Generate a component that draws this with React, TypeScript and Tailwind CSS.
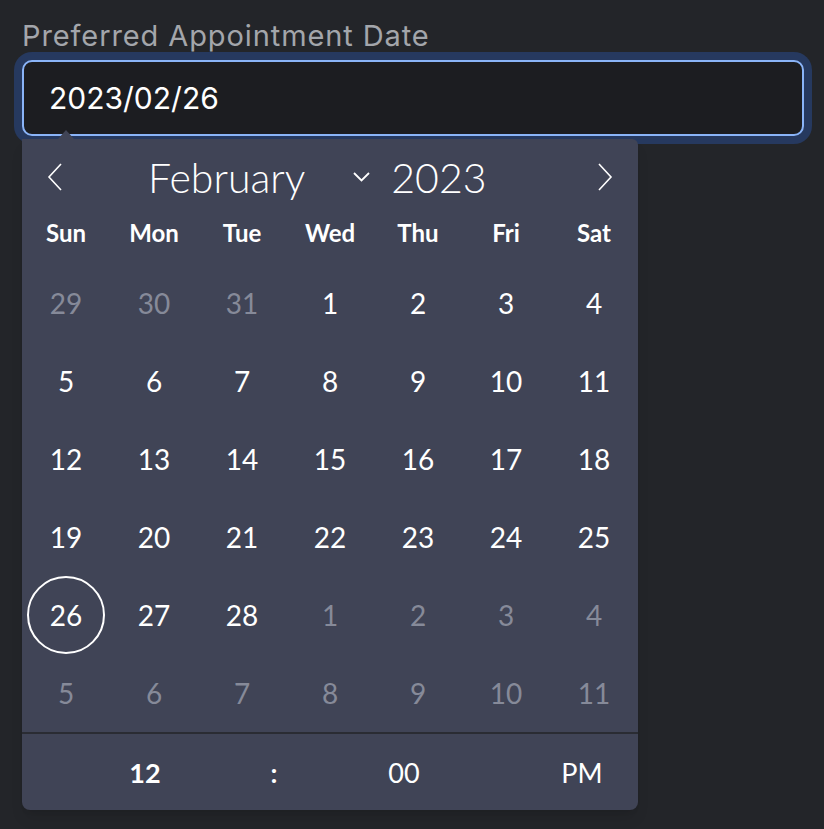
import React from "react";

const weekdays = ["Sun", "Mon", "Tue", "Wed", "Thu", "Fri", "Sat"];

type Day = { n: number; muted?: boolean; selected?: boolean };

const weeks: Day[][] = [
  [{ n: 29, muted: true }, { n: 30, muted: true }, { n: 31, muted: true }, { n: 1 }, { n: 2 }, { n: 3 }, { n: 4 }],
  [{ n: 5 }, { n: 6 }, { n: 7 }, { n: 8 }, { n: 9 }, { n: 10 }, { n: 11 }],
  [{ n: 12 }, { n: 13 }, { n: 14 }, { n: 15 }, { n: 16 }, { n: 17 }, { n: 18 }],
  [{ n: 19 }, { n: 20 }, { n: 21 }, { n: 22 }, { n: 23 }, { n: 24 }, { n: 25 }],
  [{ n: 26, selected: true }, { n: 27 }, { n: 28 }, { n: 1, muted: true }, { n: 2, muted: true }, { n: 3, muted: true }, { n: 4, muted: true }],
  [{ n: 5, muted: true }, { n: 6, muted: true }, { n: 7, muted: true }, { n: 8, muted: true }, { n: 9, muted: true }, { n: 10, muted: true }, { n: 11, muted: true }],
];

export default function App() {
  return (
    <div className="min-h-screen bg-[#232529] px-[22px] pt-[18px] font-['Inter',sans-serif]">
      {/* Label */}
      <label className="block text-[29px] leading-[36px] tracking-[0.9px] text-[#a3a6ab]">Preferred Appointment Date</label>

      {/* Input + popup */}
      <div className="relative mt-[6px] w-[782px]">
        <div className="h-[76px] rounded-[10px] border-2 border-[#8ab4f8] bg-[#1c1d21] ring-8 ring-[#26395f] flex items-center pl-[25px]">
          <span className="text-[30px] text-white">2023/02/26</span>
        </div>

        {/* caret */}
        <div className="absolute left-[36px] top-[70px] w-0 h-0 border-l-[8px] border-r-[8px] border-b-[9px] border-l-transparent border-r-transparent border-b-[#404456]" />

        {/* Calendar popup */}
        <div className="absolute left-0 top-[79px] w-[616px] bg-[#404456] rounded-tr-[6px] rounded-b-[8px] font-['Lato',sans-serif] text-white shadow-lg">
          {/* Header */}
          <div className="h-[76px] flex items-center">
            <button className="w-[66px] flex justify-center">
              <svg width="16" height="28" viewBox="0 0 16 28" fill="none" stroke="white" strokeWidth="1.6">
                <path d="M14 1 L2 14 L14 27" />
              </svg>
            </button>
            <span className="ml-[60px] text-[41px] font-light leading-none">February</span>
            <svg className="ml-[48px]" width="17" height="10" viewBox="0 0 17 10" fill="none" stroke="white" strokeWidth="1.8">
              <path d="M1 1 L8.5 8.5 L16 1" />
            </svg>
            <span className="ml-[21px] text-[41px] font-light leading-none">2023</span>
            <button className="ml-auto w-[66px] flex justify-center">
              <svg width="16" height="28" viewBox="0 0 16 28" fill="none" stroke="white" strokeWidth="1.6">
                <path d="M2 1 L14 14 L2 27" />
              </svg>
            </button>
          </div>

          {/* Weekdays */}
          <div className="grid grid-cols-7 h-[36px] items-center">
            {weekdays.map((w) => (
              <div key={w} className="text-center text-[24px] font-bold leading-none">
                {w}
              </div>
            ))}
          </div>

          {/* Days */}
          <div className="mt-[13px]">
            {weeks.map((week, i) => (
              <div key={i} className="grid grid-cols-7 h-[78px]">
                {week.map((d, j) => (
                  <div key={j} className="flex items-center justify-center">
                    <span
                      className={`flex items-center justify-center w-[78px] h-[78px] rounded-full text-[28px] leading-none ${
                        d.selected ? "border-2 border-white" : ""
                      } ${d.muted ? "text-[#868a99]" : "text-white"}`}
                    >
                      {d.n}
                    </span>
                  </div>
                ))}
              </div>
            ))}
          </div>

          {/* Time */}
          <div className="border-t-2 border-[#2a2c33] h-[78px] flex items-center text-[27px] leading-none">
            <span className="ml-[58px] w-[130px] text-center font-bold">12</span>
            <span className="w-[128px] text-center font-bold">:</span>
            <span className="w-[132px] text-center">00</span>
            <span className="ml-auto w-[112px] text-center">PM</span>
          </div>
        </div>
      </div>
    </div>
  );
}
